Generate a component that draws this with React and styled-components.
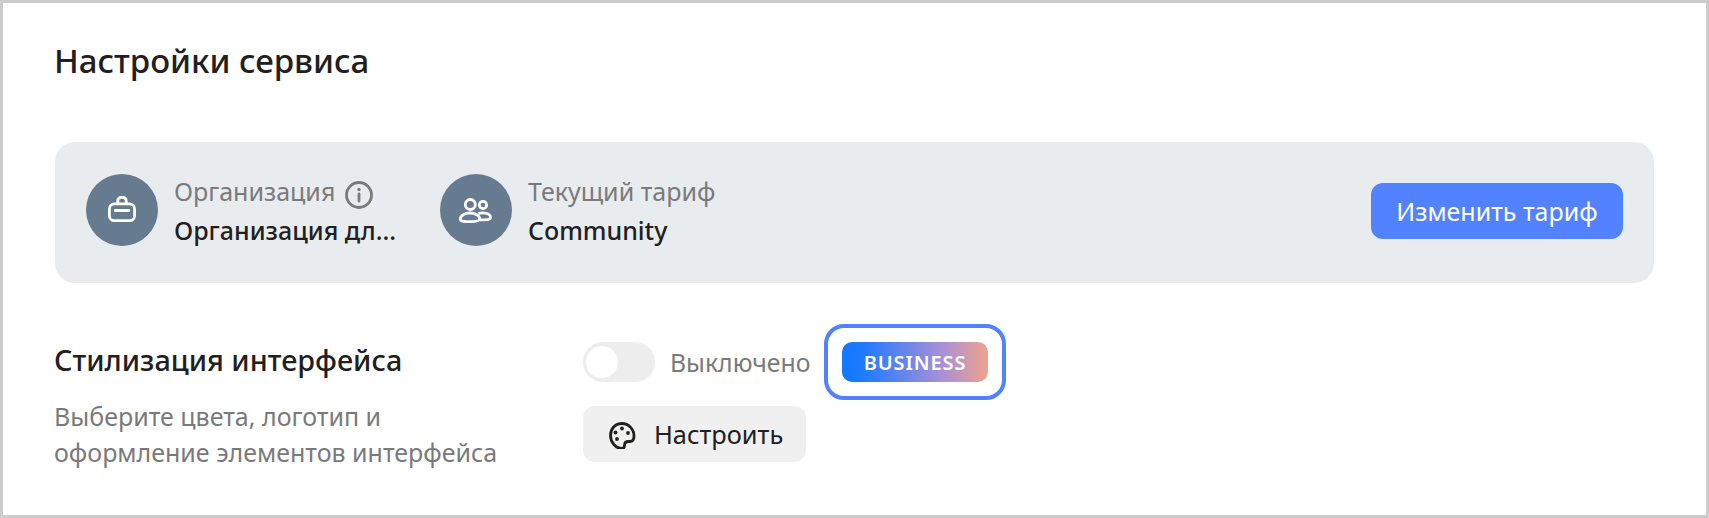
import React from 'react'
import styled, { createGlobalStyle } from 'styled-components'

const GlobalStyle = createGlobalStyle`
  html, body {
    margin: 0;
    background: #fff;
  }
  body {
    font-family: "Noto Sans", "Open Sans", sans-serif;
    color: #21201f;
  }
`

const Page = styled.div`
  box-sizing: border-box;
  width: 1709px;
  height: 518px;
  border: 3px solid #ccc;
  padding: 39px 52px 0 52px;
  background: #fff;
`

const Title = styled.h1`
  margin: 0 0 63px -1px;
  font-size: 33px;
  line-height: 37px;
  font-weight: 500;
`

const Panel = styled.section`
  box-sizing: border-box;
  display: flex;
  align-items: center;
  height: 141px;
  padding: 0 31px 6px;
  border-radius: 20px;
  background: #e9ecef;
`

const InfoBlock = styled.div`
  display: flex;
  align-items: center;
  gap: 16px;
  width: ${p => p.$width}px;
`

const Avatar = styled.div`
  flex: none;
  display: flex;
  align-items: center;
  justify-content: center;
  width: 72px;
  height: 72px;
  border-radius: 50%;
  background: #667b90;
`

const InfoText = styled.div`
  display: flex;
  flex-direction: column;
  gap: 6px;
  min-width: 0;
`

const InfoLabel = styled.div`
  display: flex;
  align-items: center;
  gap: 10px;
  height: 34px;
  font-size: 25px;
  color: #7a7a7a;
`

const InfoValue = styled.div`
  font-size: 25px;
  line-height: 32px;
  font-weight: 500;
  white-space: nowrap;
`

const PrimaryButton = styled.button`
  margin: 2px 0 0 auto;
  width: 252px;
  height: 56px;
  border: 0;
  border-radius: 12px;
  background: #5282ff;
  color: #fff;
  font: 400 25px "Noto Sans", sans-serif;
`

const Settings = styled.section`
  display: flex;
  margin-top: 59px;
`

const SettingsInfo = styled.div`
  width: 528px;
  margin-left: -1px;
  padding-right: 1px;
`

const SettingsTitle = styled.h2`
  margin: 0 0 20px;
  font-size: 28.8px;
  line-height: 36px;
  font-weight: 500;
`

const SettingsHint = styled.p`
  margin: 0;
  font-size: 25px;
  line-height: 36px;
  color: #7a7a7a;
`

const Controls = styled.div`
  display: flex;
  flex-direction: column;
  align-items: flex-start;
  gap: 24px;
`

const ToggleRow = styled.div`
  display: flex;
  align-items: center;
`

const Toggle = styled.div`
  box-sizing: border-box;
  width: 72px;
  height: 40px;
  padding: 4px 3px;
  border-radius: 20px;
  background: #ededed;

  &::before {
    content: '';
    display: block;
    width: 32px;
    height: 32px;
    border-radius: 50%;
    background: #fff;
  }
`

const ToggleLabel = styled.span`
  width: 142px;
  margin: 0 30px 0 15px;
  font-size: 24.8px;
  color: #7a7a7a;
`

const Badge = styled.div`
  position: relative;
  display: flex;
  align-items: center;
  justify-content: center;
  width: 146px;
  height: 40px;
  border-radius: 10px;
  background: linear-gradient(90deg, #1177ff 0%, #1f7bff 15%, #a88fd8 68%, #f0a38c 100%);
  color: #fff;
  font-size: 20px;
  font-weight: 600;
  letter-spacing: 0.9px;

  &::after {
    content: '';
    position: absolute;
    inset: -18px;
    border: 4px solid #5282ff;
    border-radius: 20px;
  }
`

const SecondaryButton = styled.button`
  display: flex;
  align-items: center;
  gap: 16px;
  width: 223px;
  height: 56px;
  padding: 0 0 0 25px;
  border: 0;
  border-radius: 12px;
  background: #f0f0f0;
  color: #21201f;
  font: 400 25.4px "Noto Sans", sans-serif;

  svg {
    flex: none;
  }
`

const InfoSvg = styled.svg`
  flex: none;
  margin-top: 8px;
`

const Briefcase = () => (
  <svg width="32" height="32" viewBox="0 0 32 32" fill="none" stroke="#fff" strokeWidth="2.8" strokeLinejoin="round">
    <rect x="3.4" y="9.9" width="25.2" height="16.8" rx="5" />
    <path d="M11.8 9.5V6.5a3 3 0 0 1 3-3h2.4a3 3 0 0 1 3 3v3" />
    <path d="M9.3 16.5h13.4" strokeLinecap="round" />
  </svg>
)

const Users = () => (
  <svg width="36" height="28" viewBox="0 0 36 28" fill="none" stroke="#fff" strokeWidth="2.8">
    <circle cx="12.3" cy="8.5" r="5" />
    <circle cx="25" cy="9" r="3.7" />
    <path d="M2.3 23c0-3.5 4.5-6 9.7-6s9.7 2.5 9.7 6c0 2-2.5 2.7-9.7 2.7S2.3 25 2.3 23z" />
    <path d="M20.5 17.5c1.4-.5 3-.7 4.5-.7 4.2 0 7.7 2 7.7 4.7 0 1.6-2.3 2.3-6 2.3h-4.7" />
  </svg>
)

const InfoIcon = () => (
  <InfoSvg width="28" height="28" viewBox="0 0 28 28" fill="none" stroke="#7a7a7a" strokeWidth="2.8">
    <circle cx="14" cy="14" r="12.5" />
    <path d="M14 13v7" strokeLinecap="round" />
    <circle cx="14" cy="8.5" r="1.7" fill="#7a7a7a" stroke="none" />
  </InfoSvg>
)

const PaletteIcon = () => (
  <svg width="30" height="30" viewBox="0 -1 30 30" fill="none">
    <path
      d="M14 3.5C7 3.5 2.5 9 2.5 15.5c0 7 5.5 13 11 13 2.5 0 3-1.5 3-3 0-2.5 1.5-4 4-4H22c2.5 0 4-2 4-5.5C26 9 20.5 3.5 14 3.5z"
      stroke="#21201f"
      strokeWidth="2.8"
      strokeLinejoin="round"
    />
    <circle cx="14" cy="8.5" r="1.9" fill="#21201f" />
    <circle cx="7.5" cy="12.5" r="1.9" fill="#21201f" />
    <circle cx="20" cy="13" r="1.9" fill="#21201f" />
    <circle cx="9" cy="19" r="1.9" fill="#21201f" />
  </svg>
)

export default function App() {
  return (
    <>
      <GlobalStyle />
      <Page>
        <Title>Настройки сервиса</Title>
        <Panel>
          <InfoBlock $width={354}>
            <Avatar><Briefcase /></Avatar>
            <InfoText>
              <InfoLabel>Организация <InfoIcon /></InfoLabel>
              <InfoValue>Организация дл...</InfoValue>
            </InfoText>
          </InfoBlock>
          <InfoBlock $width={400}>
            <Avatar><Users /></Avatar>
            <InfoText>
              <InfoLabel>Текущий тариф</InfoLabel>
              <InfoValue>Community</InfoValue>
            </InfoText>
          </InfoBlock>
          <PrimaryButton>Изменить тариф</PrimaryButton>
        </Panel>
        <Settings>
          <SettingsInfo>
            <SettingsTitle>Стилизация интерфейса</SettingsTitle>
            <SettingsHint>Выберите цвета, логотип и<br />оформление элементов интерфейса</SettingsHint>
          </SettingsInfo>
          <Controls>
            <ToggleRow>
              <Toggle />
              <ToggleLabel>Выключено</ToggleLabel>
              <Badge>BUSINESS</Badge>
            </ToggleRow>
            <SecondaryButton><PaletteIcon />Настроить</SecondaryButton>
          </Controls>
        </Settings>
      </Page>
    </>
  )
}
